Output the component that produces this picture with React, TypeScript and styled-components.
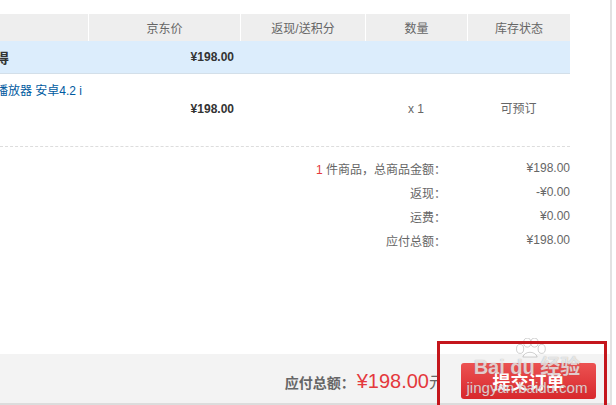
import React from "react";
import styled, { createGlobalStyle } from "styled-components";

// Global page reset
const GlobalStyle = createGlobalStyle`
  html, body {
    margin: 0;
    padding: 0;
    background: #fff;
  }
  body {
    font-family: "Liberation Sans", "Noto Sans CJK SC", sans-serif;
    font-size: 12px;
    color: #666;
  }
`;

type Summary = { label: React.ReactNode; value: string };

const summaries: Summary[] = [
  {
    label: (
      <>
        <Red>1</Red> 件商品，总商品金额：
      </>
    ),
    value: "¥198.00",
  },
  { label: "返现：", value: "-¥0.00" },
  { label: "运费：", value: "¥0.00" },
  { label: "应付总额：", value: "¥198.00" },
];

const headers = ["", "京东价", "返现/送积分", "数量", "库存状态"];

const App: React.FC = () => (
  <Page>
    <GlobalStyle />
    <Frame>
      <Table>
        <HeadRow>
          {headers.map((h, i) => (
            <HeadCell key={i}>{h}</HeadCell>
          ))}
        </HeadRow>
        <ShopRow>
          <ClipCell>
            <ShopName>得</ShopName>
          </ClipCell>
          <PriceCell>¥198.00</PriceCell>
        </ShopRow>
        <ItemRow>
          <ItemName href="#">播放器 安卓4.2 i</ItemName>
          <ItemLine>
            <span />
            <PriceCell>¥198.00</PriceCell>
            <span />
            <CenterCell>x 1</CenterCell>
            <CenterCell>可预订</CenterCell>
          </ItemLine>
        </ItemRow>
        <Dashed />
        <SummaryList>
          {summaries.map((s, i) => (
            <SummaryRow key={i}>
              <SummaryLabel>{s.label}</SummaryLabel>
              <SummaryValue>{s.value}</SummaryValue>
            </SummaryRow>
          ))}
        </SummaryList>
      </Table>
      <Spacer />
      <Footer>
        <TotalArea>
          <TotalText>
            <TotalLabel>应付总额：</TotalLabel>
            <TotalPrice>¥198.00</TotalPrice>
            <TotalUnit>元</TotalUnit>
          </TotalText>
        </TotalArea>
        <ActionArea>
          <SubmitButton>提交订单</SubmitButton>
        </ActionArea>
      </Footer>
    </Frame>
    <Watermark>
      <Paw viewBox="0 0 40 22">
        <ellipse cx="9" cy="12" rx="4" ry="5" />
        <ellipse cx="17" cy="5" rx="4" ry="5" />
        <ellipse cx="25" cy="5" rx="4" ry="5" />
        <ellipse cx="33" cy="12" rx="4" ry="5" />
        <path d="M12 21 C14 14 26 14 28 21 Z" />
      </Paw>
      <MarkTitle>Bai du 经验</MarkTitle>
      <MarkUrl>jingyan.baidu.com</MarkUrl>
    </Watermark>
    <Highlight />
  </Page>
);

export default App;

// Styled-Components
function Red({ children }: { children: React.ReactNode }) {
  return <RedText>{children}</RedText>;
}

const RedText = styled.span`
  color: #e4393c;
`;

// Page
const Page = styled.div`
  position: relative;
  width: 616px;
  height: 405px;
  overflow: hidden;
  display: flex;
`;

// Frame with right border
const Frame = styled.div`
  width: 612px;
  height: 405px;
  border-right: 2px solid #e2e2e2;
  display: flex;
  flex-direction: column;
  padding-top: 14px;
  box-sizing: border-box;
`;

// Table
const Table = styled.div`
  width: 570px;
  display: flex;
  flex-direction: column;
`;

const columns = "88px 152px 125px 102px 103px";

const HeadRow = styled.div`
  display: grid;
  grid-template-columns: ${columns};
  height: 27px;
  background: #eeeeee;
`;

const HeadCell = styled.div`
  display: flex;
  align-items: center;
  justify-content: center;
  color: #666;
  border-left: 1px solid #fff;
  &:first-child {
    border-left: none;
  }
`;

const ShopRow = styled.div`
  display: grid;
  grid-template-columns: ${columns};
  height: 32px;
  background: #dcedfc;
  border-bottom: 1px solid #d3dfe9;
  align-items: center;
`;

const ClipCell = styled.div`
  overflow: hidden;
`;

const ShopName = styled.div`
  font-weight: bold;
  font-size: 14px;
  color: #333;
  text-indent: -5px;
`;

const PriceCell = styled.div`
  font-weight: bold;
  color: #333;
  text-align: right;
  padding-right: 6px;
`;

const ItemRow = styled.div`
  height: 72px;
  display: flex;
  flex-direction: column;
  padding-top: 10px;
  box-sizing: border-box;
`;

const ItemName = styled.a`
  color: #005aa0;
  text-decoration: none;
  text-indent: -4px;
  white-space: nowrap;
  overflow: hidden;
  width: 88px;
  line-height: 14px;
`;

const ItemLine = styled.div`
  display: grid;
  grid-template-columns: ${columns};
  margin-top: 4px;
  line-height: 14px;
`;

const CenterCell = styled.div`
  text-align: center;
  color: #666;
`;

const Dashed = styled.div`
  border-top: 1px dashed #dddddd;
`;

const SummaryList = styled.div`
  display: flex;
  flex-direction: column;
  padding-top: 9px;
`;

const SummaryRow = styled.div`
  display: grid;
  grid-template-columns: 446px 124px;
  height: 24px;
  align-items: center;
`;

const SummaryLabel = styled.div`
  text-align: right;
  color: #666;
`;

const SummaryValue = styled.div`
  text-align: right;
  color: #666;
`;

const Spacer = styled.div`
  flex: 1;
`;

// Footer bar
const Footer = styled.div`
  width: 610px;
  height: 49px;
  background: #f3f3f3;
  border-bottom: 2px solid #dcdcdc;
  display: flex;
  align-items: center;
`;

const TotalArea = styled.div`
  width: 437px;
  height: 100%;
  display: flex;
  align-items: center;
  justify-content: flex-end;
  overflow: hidden;
`;

const TotalText = styled.div`
  display: flex;
  align-items: baseline;
  white-space: nowrap;
  margin-right: -8px;
  padding-top: 5px;
`;

const TotalLabel = styled.span`
  font-size: 14px;
  font-weight: bold;
  color: #666;
`;

const TotalPrice = styled.span`
  font-size: 20px;
  color: #e4393c;
  margin-left: 2px;
`;

const TotalUnit = styled.span`
  font-size: 16px;
  color: #666;
`;

const ActionArea = styled.div`
  flex: 1;
  display: flex;
  align-items: center;
  padding-left: 24px;
  padding-top: 4px;
`;

const SubmitButton = styled.button`
  width: 135px;
  height: 36px;
  border: none;
  border-radius: 3px;
  background: linear-gradient(#ec5252, #d8282c);
  color: #fff;
  font-family: "Liberation Sans", "Noto Sans CJK SC", sans-serif;
  font-size: 18px;
  font-weight: bold;
  cursor: pointer;
`;

// Annotation box drawn over the button
const Highlight = styled.div`
  position: absolute;
  left: 437px;
  top: 341px;
  width: 170px;
  height: 70px;
  border: 3px solid #c4161c;
  box-sizing: border-box;
  pointer-events: none;
`;

// Baidu watermark
const Watermark = styled.div`
  position: absolute;
  left: 466px;
  top: 338px;
  width: 122px;
  display: flex;
  flex-direction: column;
  align-items: center;
  pointer-events: none;
  color: rgba(255, 255, 255, 0.7);
  text-shadow: 0 0 1px rgba(110, 110, 110, 0.6);
`;

const Paw = styled.svg`
  width: 36px;
  height: 20px;
  fill: rgba(255, 255, 255, 0.6);
  stroke: rgba(150, 150, 150, 0.5);
  stroke-width: 1;
  margin-left: 6px;
`;

const MarkTitle = styled.div`
  font-size: 20px;
  font-weight: bold;
  line-height: 20px;
  margin-top: -1px;
`;

const MarkUrl = styled.div`
  font-size: 15px;
  line-height: 16px;
  margin-top: 3px;
`;
